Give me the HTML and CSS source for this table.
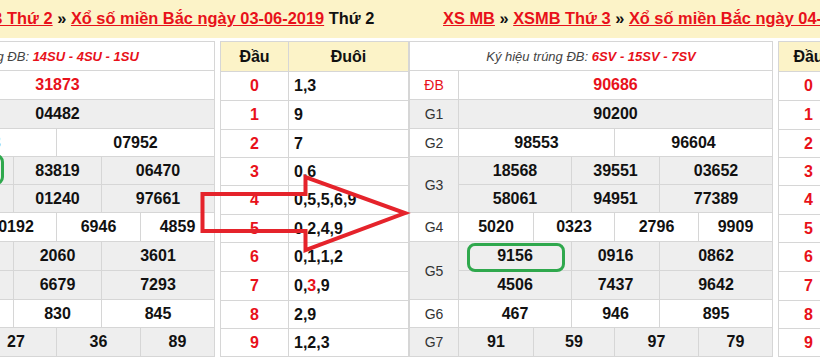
FILE: index.html
```html
<!DOCTYPE html>
<html lang="vi">
<head>
<meta charset="utf-8">
<title>XSMB</title>
<link rel="stylesheet" href="styles.css">
</head>
<body>
<div class="stage">
  <div class="panel panel-left">
    <div class="page">
      <div class="hdr"><a>XS MB</a> » <a>XSMB Thứ 2</a> » <a>Xổ số miền Bắc ngày 03-06-2019</a> Thứ 2</div>
      <div class="content">
        <div class="kq">
          <div class="kh">Ký hiệu trúng ĐB:&nbsp;<span>14SU - 4SU - 1SU</span></div>
          <div class="row"><div class="lbl red">ĐB</div><div class="vals c1 h29"><span class="red">31873</span></div></div>
          <div class="row gray"><div class="lbl">G1</div><div class="vals c1 h29"><span>04482</span></div></div>
          <div class="row"><div class="lbl">G2</div><div class="vals c2 h28"><span>75203</span><span>07952</span></div></div>
          <div class="row gray"><div class="lbl">G3</div><div class="vals c3 h28"><span>27745</span><span>83819</span><span>06470</span><span>15549</span><span>01240</span><span>97661</span></div></div>
          <div class="row"><div class="lbl">G4</div><div class="vals c4 h29"><span>4154</span><span>0192</span><span>6946</span><span>4859</span></div></div>
          <div class="row gray"><div class="lbl">G5</div><div class="vals c3 h29"><span>8161</span><span>2060</span><span>3601</span><span>3762</span><span>6679</span><span>7293</span></div></div>
          <div class="row"><div class="lbl">G6</div><div class="vals c3 h28"><span>791</span><span>830</span><span>845</span></div></div>
          <div class="row gray"><div class="lbl">G7</div><div class="vals c4 h29"><span>50</span><span>27</span><span>36</span><span>89</span></div></div>
        </div>
        <div class="dd">
          <span class="h">Đầu</span><span class="h">Đuôi</span>
          <span class="d">0</span><span class="t">1,3</span>
          <span class="d">1</span><span class="t">9</span>
          <span class="d">2</span><span class="t">7</span>
          <span class="d">3</span><span class="t">0,6</span>
          <span class="d">4</span><span class="t">0,5,5,6,9</span>
          <span class="d">5</span><span class="t">0,2,4,9</span>
          <span class="d">6</span><span class="t">0,1,1,2</span>
          <span class="d">7</span><span class="t">0,<em class="red">3</em>,9</span>
          <span class="d">8</span><span class="t">2,9</span>
          <span class="d">9</span><span class="t">1,2,3</span>
        </div>
      </div>
      <div class="ring ring-left"></div>
    </div>
  </div>
  <div class="panel panel-right">
    <div class="page">
      <div class="hdr"><a>XS MB</a> » <a>XSMB Thứ 3</a> » <a>Xổ số miền Bắc ngày 04-06-2019</a> Thứ 3</div>
      <div class="content">
        <div class="kq">
          <div class="kh">Ký hiệu trúng ĐB:&nbsp;<span>6SV - 15SV - 7SV</span></div>
          <div class="row"><div class="lbl red">ĐB</div><div class="vals c1 h29"><span class="red">90686</span></div></div>
          <div class="row gray"><div class="lbl">G1</div><div class="vals c1 h29"><span>90200</span></div></div>
          <div class="row"><div class="lbl">G2</div><div class="vals c2 h28"><span>98553</span><span>96604</span></div></div>
          <div class="row gray"><div class="lbl">G3</div><div class="vals c3 h28"><span>18568</span><span>39551</span><span>03652</span><span>58061</span><span>94951</span><span>77389</span></div></div>
          <div class="row"><div class="lbl">G4</div><div class="vals c4 h29"><span>5020</span><span>0323</span><span>2796</span><span>9909</span></div></div>
          <div class="row gray"><div class="lbl">G5</div><div class="vals c3 h29"><span>9156</span><span>0916</span><span>0862</span><span>4506</span><span>7437</span><span>9642</span></div></div>
          <div class="row"><div class="lbl">G6</div><div class="vals c3 h28"><span>467</span><span>946</span><span>895</span></div></div>
          <div class="row gray"><div class="lbl">G7</div><div class="vals c4 h29"><span>91</span><span>59</span><span>97</span><span>79</span></div></div>
        </div>
        <div class="dd dd-narrow">
          <span class="h">Đầu</span><span class="h">Đuôi</span>
          <span class="d">0</span><span class="t">0,4,6,9</span>
          <span class="d">1</span><span class="t">6</span>
          <span class="d">2</span><span class="t">0,3</span>
          <span class="d">3</span><span class="t">7</span>
          <span class="d">4</span><span class="t">2,6</span>
          <span class="d">5</span><span class="t">1,1,2,3,6,9</span>
          <span class="d">6</span><span class="t">1,2,7,8</span>
          <span class="d">7</span><span class="t">9</span>
          <span class="d">8</span><span class="t">6,9</span>
          <span class="d">9</span><span class="t">1,5,6,7</span>
        </div>
      </div>
      <div class="ring ring-right"></div>
    </div>
  </div>
  <svg class="arrow" width="820" height="360" viewBox="0 0 820 360">
    <path d="M202.5 194 H305.5 V177 L405 213 L305.5 250 V231 H202.5 Z" fill="none" stroke="#e5232b" stroke-width="4" stroke-linejoin="miter"/>
  </svg>
</div>
</body>
</html>
```

FILE: styles.css
```css
* {
  box-sizing: border-box;
  margin: 0;
  padding: 0;
}

body {
  margin: 0;
  width: 820px;
  height: 360px;
  overflow: hidden;
  background: #ffffff;
  font-family: "Liberation Sans", Arial, sans-serif;
  color: #111111;
}

.stage {
  position: relative;
  display: flex;
  width: 820px;
  height: 360px;
  overflow: hidden;
}

.panel {
  height: 360px;
  overflow: hidden;
}

.panel-left {
  flex: none;
  width: 409px;
}

.panel-right {
  flex: 1;
}

.page {
  position: relative;
  width: 560px;
}

.panel-left .page {
  margin-left: -149px;
}

.hdr {
  height: 38px;
  padding-left: 34px;
  background: #fcf3c8;
  font-size: 16.4px;
  font-weight: bold;
  line-height: 36px;
  white-space: nowrap;
  color: #111111;
}

.hdr a {
  color: #e8111a;
  text-decoration: underline;
}

.content {
  display: flex;
  align-items: flex-start;
  gap: 5px;
  margin-top: 3px;
}

.red {
  color: #e8111a;
}

em.red {
  font-style: normal;
}

/* result table */
.kq {
  flex: none;
  width: 364px;
  border-left: 1px solid #d6d6d6;
  border-top: 1px solid #d6d6d6;
}

.kh {
  display: flex;
  align-items: center;
  justify-content: center;
  height: 29px;
  border-right: 1px solid #d6d6d6;
  border-bottom: 1px solid #d6d6d6;
  font-size: 13px;
  font-style: italic;
  color: #444444;
  white-space: nowrap;
}

.kh span {
  color: #e8111a;
  font-weight: bold;
}

.row {
  display: grid;
  grid-template-columns: 49px 314px;
  background: #ffffff;
}

.row.gray {
  background: #eeeeee;
}

.lbl {
  display: flex;
  align-items: center;
  justify-content: center;
  border-right: 1px solid #d6d6d6;
  border-bottom: 1px solid #d6d6d6;
  font-size: 14px;
  color: #333333;
}

.lbl.red {
  color: #e8111a;
}

.vals {
  display: grid;
}

.vals span {
  display: flex;
  align-items: center;
  justify-content: center;
  border-right: 1px solid #d6d6d6;
  border-bottom: 1px solid #d6d6d6;
  font-size: 16px;
  font-weight: bold;
  white-space: nowrap;
}

.h28 { grid-auto-rows: 28px; }
.h29 { grid-auto-rows: 29px; }

.c1 { grid-template-columns: 314px; }
.c2 { grid-template-columns: 156px 158px; }
.c3 { grid-template-columns: 113px 88px 113px; }
.c4 { grid-template-columns: 75px 81px 84px 74px; }

/* dau / duoi table */
.dd {
  flex: none;
  display: grid;
  grid-template-columns: 68px 120px;
  grid-template-rows: 30px 29px 29px 28px 28px 29px 28px 29px 29px 28px 28px;
  width: 189px;
  border-left: 1px solid #d6d6d6;
  border-top: 1px solid #d6d6d6;
}

.dd.dd-narrow {
  grid-template-columns: 60px 128px;
}

.dd span {
  display: flex;
  align-items: center;
  justify-content: center;
  border-right: 1px solid #d6d6d6;
  border-bottom: 1px solid #d6d6d6;
  font-size: 16px;
  font-weight: bold;
  white-space: nowrap;
}

.dd .h {
  background: #fcf3c8;
  color: #111111;
}

.dd .d {
  color: #e8111a;
}

.dd .t {
  justify-content: flex-start;
  padding-left: 5px;
}

/* annotations */
.ring {
  position: absolute;
  border: 3px solid #2fa84d;
  border-radius: 8px;
}

.ring-right {
  left: 58px;
  top: 243px;
  width: 98px;
  height: 29px;
}

.ring-left {
  left: 55px;
  top: 154px;
  width: 98px;
  height: 31px;
}

.arrow {
  position: absolute;
  left: 0;
  top: 0;
  pointer-events: none;
}
```
